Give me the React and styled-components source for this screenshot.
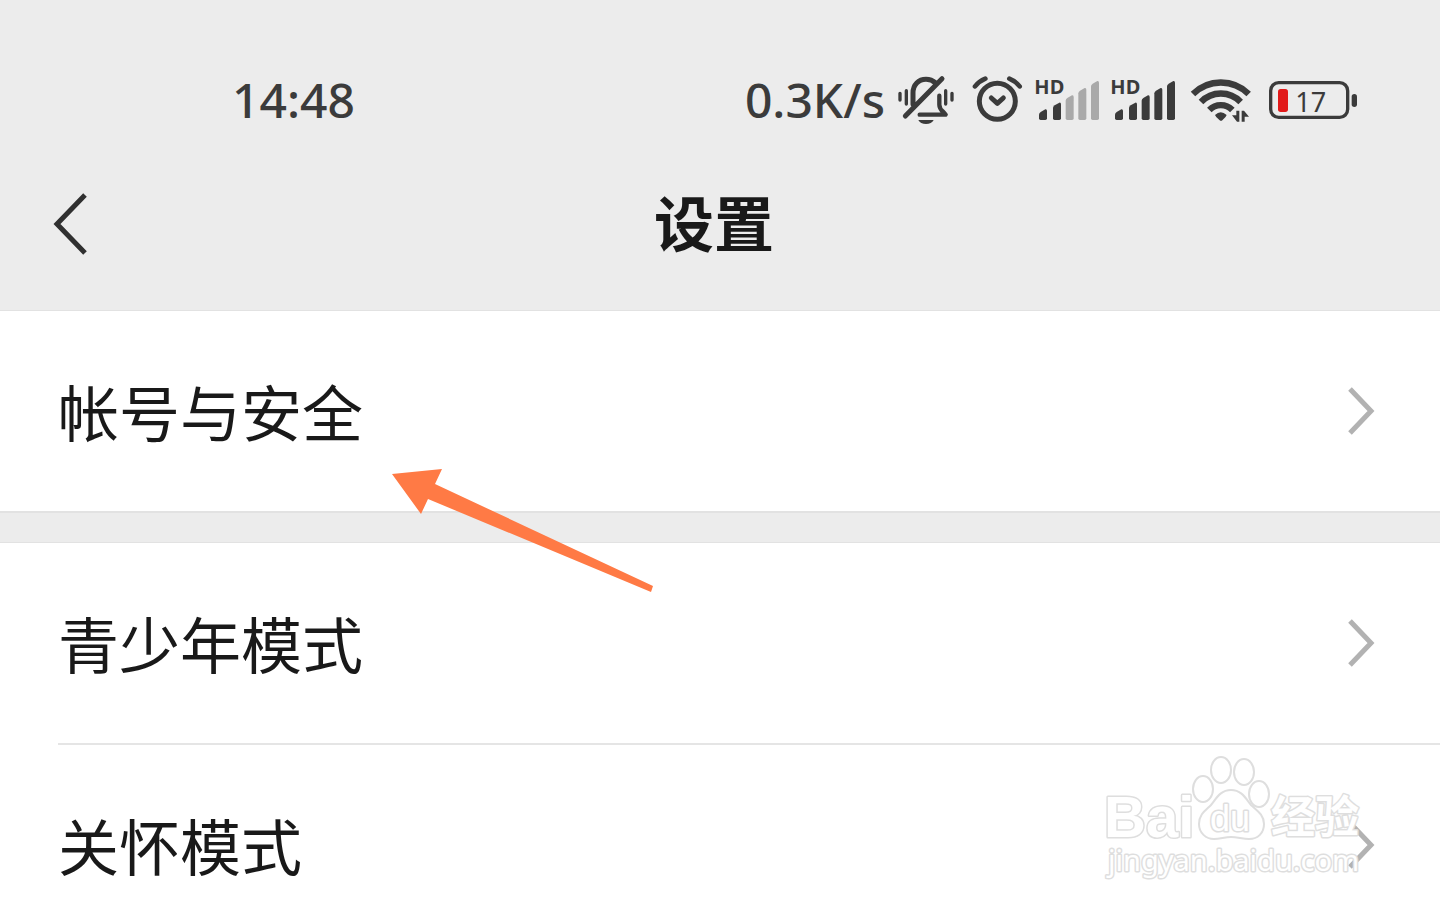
import React from "react";
import styled, { createGlobalStyle } from "styled-components";

const GlobalStyle = createGlobalStyle`
  * {
    box-sizing: border-box;
  }
  body {
    margin: 0;
    background: #ffffff;
    font-family: "Noto Sans CJK SC", sans-serif;
  }
`;

const Page = styled.div`
  height: 100vh;
  overflow: hidden;
  background: #ffffff;
`;

const Header = styled.header`
  background: #ececec;
  border-bottom: 1px solid #e2e2e2;
  padding-top: 62px;
`;

const StatusBar = styled.div`
  display: flex;
  align-items: center;
  justify-content: space-between;
  height: 76px;
  padding: 0 83px 0 232px;
  color: #3b3b3b;
`;

const StatusText = styled.span`
  font-family: "Noto Sans", sans-serif;
  font-size: 48px;
  font-weight: 500;
  line-height: 76px;
`;

const StatusIcons = styled.div`
  display: flex;
  align-items: center;
  gap: 12px;
`;

const IconText = styled.text`
  font-family: ${(props) => props.$font}, sans-serif;
  font-weight: ${(props) => props.$weight};
  font-size: ${(props) => props.$size}px;
  fill: #3b3b3b;
`;

const NavBar = styled.div`
  display: grid;
  grid-template-columns: 132px 1fr 144px;
  align-items: center;
  height: 172px;
`;

const BackButton = styled.button`
  width: 60px;
  height: 80px;
  margin-left: 40px;
  padding: 0;
  border: 0;
  background: none;
  cursor: pointer;
`;

const Title = styled.h1`
  margin: 0;
  padding-bottom: 6px;
  color: #191919;
  font-size: 60px;
  font-weight: 700;
  line-height: 80px;
  text-align: center;
`;

const Group = styled.section`
  position: relative;
  background: #ffffff;
`;

const Spacer = styled.div`
  height: 32px;
  background: #ececec;
  border-top: 2px solid #e2e2e2;
  border-bottom: 1px solid #e2e2e2;
`;

const Row = styled.button`
  display: flex;
  align-items: center;
  justify-content: space-between;
  width: 100%;
  height: 200px;
  padding: 0 65px 0 58px;
  border: 0;
  background: none;
  color: #191919;
  font-family: inherit;
  font-size: 61px;
  line-height: 80px;
  cursor: pointer;
`;

const Divider = styled.hr`
  height: 2px;
  margin: 0 0 0 58px;
  border: 0;
  background: #e5e5e5;
`;

const Pointer = styled.svg`
  position: absolute;
  top: 156px;
  left: 390px;
  z-index: 1;
`;

const Watermark = styled.svg`
  position: absolute;
  right: 70px;
  bottom: 64px;
  overflow: visible;
  pointer-events: none;
`;

const MarkText = styled.text`
  font-family: ${(props) => props.$font}, sans-serif;
  font-size: ${(props) => props.$size}px;
  font-weight: ${(props) => props.$weight};
  fill: #ffffff;
  stroke: #dedede;
  stroke-width: 3px;
  stroke-linejoin: round;
  paint-order: stroke;
`;

function MutedBell() {
  return (
    <svg width="63" height="50" viewBox="0 0 189 150" fill="none" stroke="#3b3b3b" strokeLinecap="round" strokeLinejoin="round">
      <path d="M48 88V54c0-25 17-41 39-41 12 0 21 4 29 11M25 123 135 11" strokeWidth="15" />
      <path d="M127 62v27c0 10 5 16 12 22l7 8H68" strokeWidth="13" />
      <path d="M9 55v20M28 47v40M146 47v40M165 55v20" strokeWidth="10" />
      <path d="M64 135h46c-4 8-12 12-23 12s-19-4-23-12z" fill="#3b3b3b" stroke="none" />
    </svg>
  );
}

function Alarm() {
  return (
    <svg width="52" height="50" viewBox="0 0 156 150" fill="none" stroke="#3b3b3b" strokeWidth="15" strokeLinecap="round" strokeLinejoin="round">
      <circle cx="76" cy="79" r="54" />
      <path d="M9 34q12-15 31-23M112 11q19 8 31 23" strokeWidth="14" />
      <path d="m58 69 18 16 18-16" />
    </svg>
  );
}

const bars = [
  { x: 9, top: 91 },
  { x: 51, top: 71 },
  { x: 89, top: 49 },
  { x: 127, top: 27 },
  { x: 165, top: 6 },
];

function Signal({ level }) {
  return (
    <svg width="64" height="42" viewBox="0 0 192 126" overflow="visible">
      <IconText x="-5" y="45" $font="Noto Sans" $size={60} $weight={700}>HD</IconText>
      {bars.map((bar, i) => (
        <path
          key={bar.x}
          d={`M${bar.x} ${bar.top + 16}q0-5 5-8l14-8q5-1 5 5V118q0 5-5 5h-14q-5 0-5-5z`}
          fill={i < level ? "#3b3b3b" : "#a9a9a9"}
        />
      ))}
    </svg>
  );
}

function Wifi() {
  return (
    <svg width="63" height="46" viewBox="0 0 189 138" fill="none" stroke="#3b3b3b">
      <path d="M15 51a118 118 0 0 1 167 0M39 75a82 82 0 0 1 119 0M64 99a48 48 0 0 1 69 0" strokeWidth="19" />
      <path d="M81 114q17-16 35 0-2 7-13 16-4 3-8 0-12-9-14-16z" fill="#3b3b3b" stroke="none" />
      <path d="M145 101h9v33h-7l-15-19h13zM161 134h9v-15h13l-15-18h-7z" fill="#3b3b3b" stroke="none" />
    </svg>
  );
}

function Battery() {
  return (
    <svg width="94" height="38" viewBox="0 0 282 114">
      <rect x="23" y="5" width="231" height="104" rx="24" fill="none" stroke="#3b3b3b" strokeWidth="10" />
      <rect x="45" y="24" width="30" height="69" rx="8" fill="#e21a1a" />
      <rect x="266" y="39" width="16" height="39" rx="8" fill="#3b3b3b" />
      <IconText x="97" y="92" $font="Noto Sans" $size={81} $weight={400}>17</IconText>
    </svg>
  );
}

function Chevron() {
  return (
    <svg width="28" height="50" viewBox="0 0 28 50" fill="none" stroke="#b2b2b2" strokeWidth="5">
      <path d="m3 3 21 22L3 47" />
    </svg>
  );
}

function Arrow() {
  return (
    <Pointer width="266" height="128" viewBox="0 0 266 128" aria-hidden="true">
      <path d="M2 7 52 2 45 17 263 119 261 125 38 32 31 47z" fill="#ff7a45" />
    </Pointer>
  );
}

function BaiduMark() {
  return (
    <Watermark width="264" height="130" viewBox="0 0 264 130">
      <MarkText x="-2" y="86" $font="Liberation Sans" $size={58} $weight={700}>Bai</MarkText>
      <g fill="#ffffff" stroke="#dedede" strokeWidth="2">
        <ellipse cx="97" cy="38" rx="10" ry="13" />
        <ellipse cx="115" cy="19" rx="10" ry="13" />
        <ellipse cx="138" cy="21" rx="10" ry="13" />
        <ellipse cx="153" cy="43" rx="10" ry="13" />
        <path d="M125 39c-11 0-15 9-20 15-5 5-12 9-12 19 0 9 7 15 15 15 6 0 11-2 17-2s12 2 18 2c9 0 15-6 15-15 0-10-8-14-13-19-5-6-9-15-20-15z" />
      </g>
      <MarkText x="104" y="80" $font="Liberation Sans" $size={36} $weight={400}>du</MarkText>
      <MarkText x="165" y="82" $font="Noto Sans CJK SC" $size={44} $weight={700}>经验</MarkText>
      <MarkText x="2" y="120" $font="Noto Sans" $size={29} $weight={400}>jingyan.baidu.com</MarkText>
    </Watermark>
  );
}

function SettingRow({ label }) {
  return (
    <Row type="button">
      <span>{label}</span>
      <Chevron />
    </Row>
  );
}

function App() {
  return (
    <Page>
      <GlobalStyle />
      <Header>
        <StatusBar>
          <StatusText>14:48</StatusText>
          <StatusIcons>
            <StatusText>0.3K/s</StatusText>
            <MutedBell />
            <Alarm />
            <Signal level={2} />
            <Signal level={5} />
            <Wifi />
            <Battery />
          </StatusIcons>
        </StatusBar>
        <NavBar>
          <BackButton type="button" aria-label="返回">
            <svg width="60" height="80" viewBox="0 0 60 80" fill="none" stroke="#303030" strokeWidth="5">
              <path d="M45 11 17 40l28 29" />
            </svg>
          </BackButton>
          <Title>设置</Title>
        </NavBar>
      </Header>
      <main>
        <Group>
          <SettingRow label="帐号与安全" />
          <Arrow />
        </Group>
        <Spacer />
        <Group>
          <SettingRow label="青少年模式" />
          <Divider />
          <SettingRow label="关怀模式" />
          <BaiduMark />
        </Group>
      </main>
    </Page>
  );
}

export default App;
